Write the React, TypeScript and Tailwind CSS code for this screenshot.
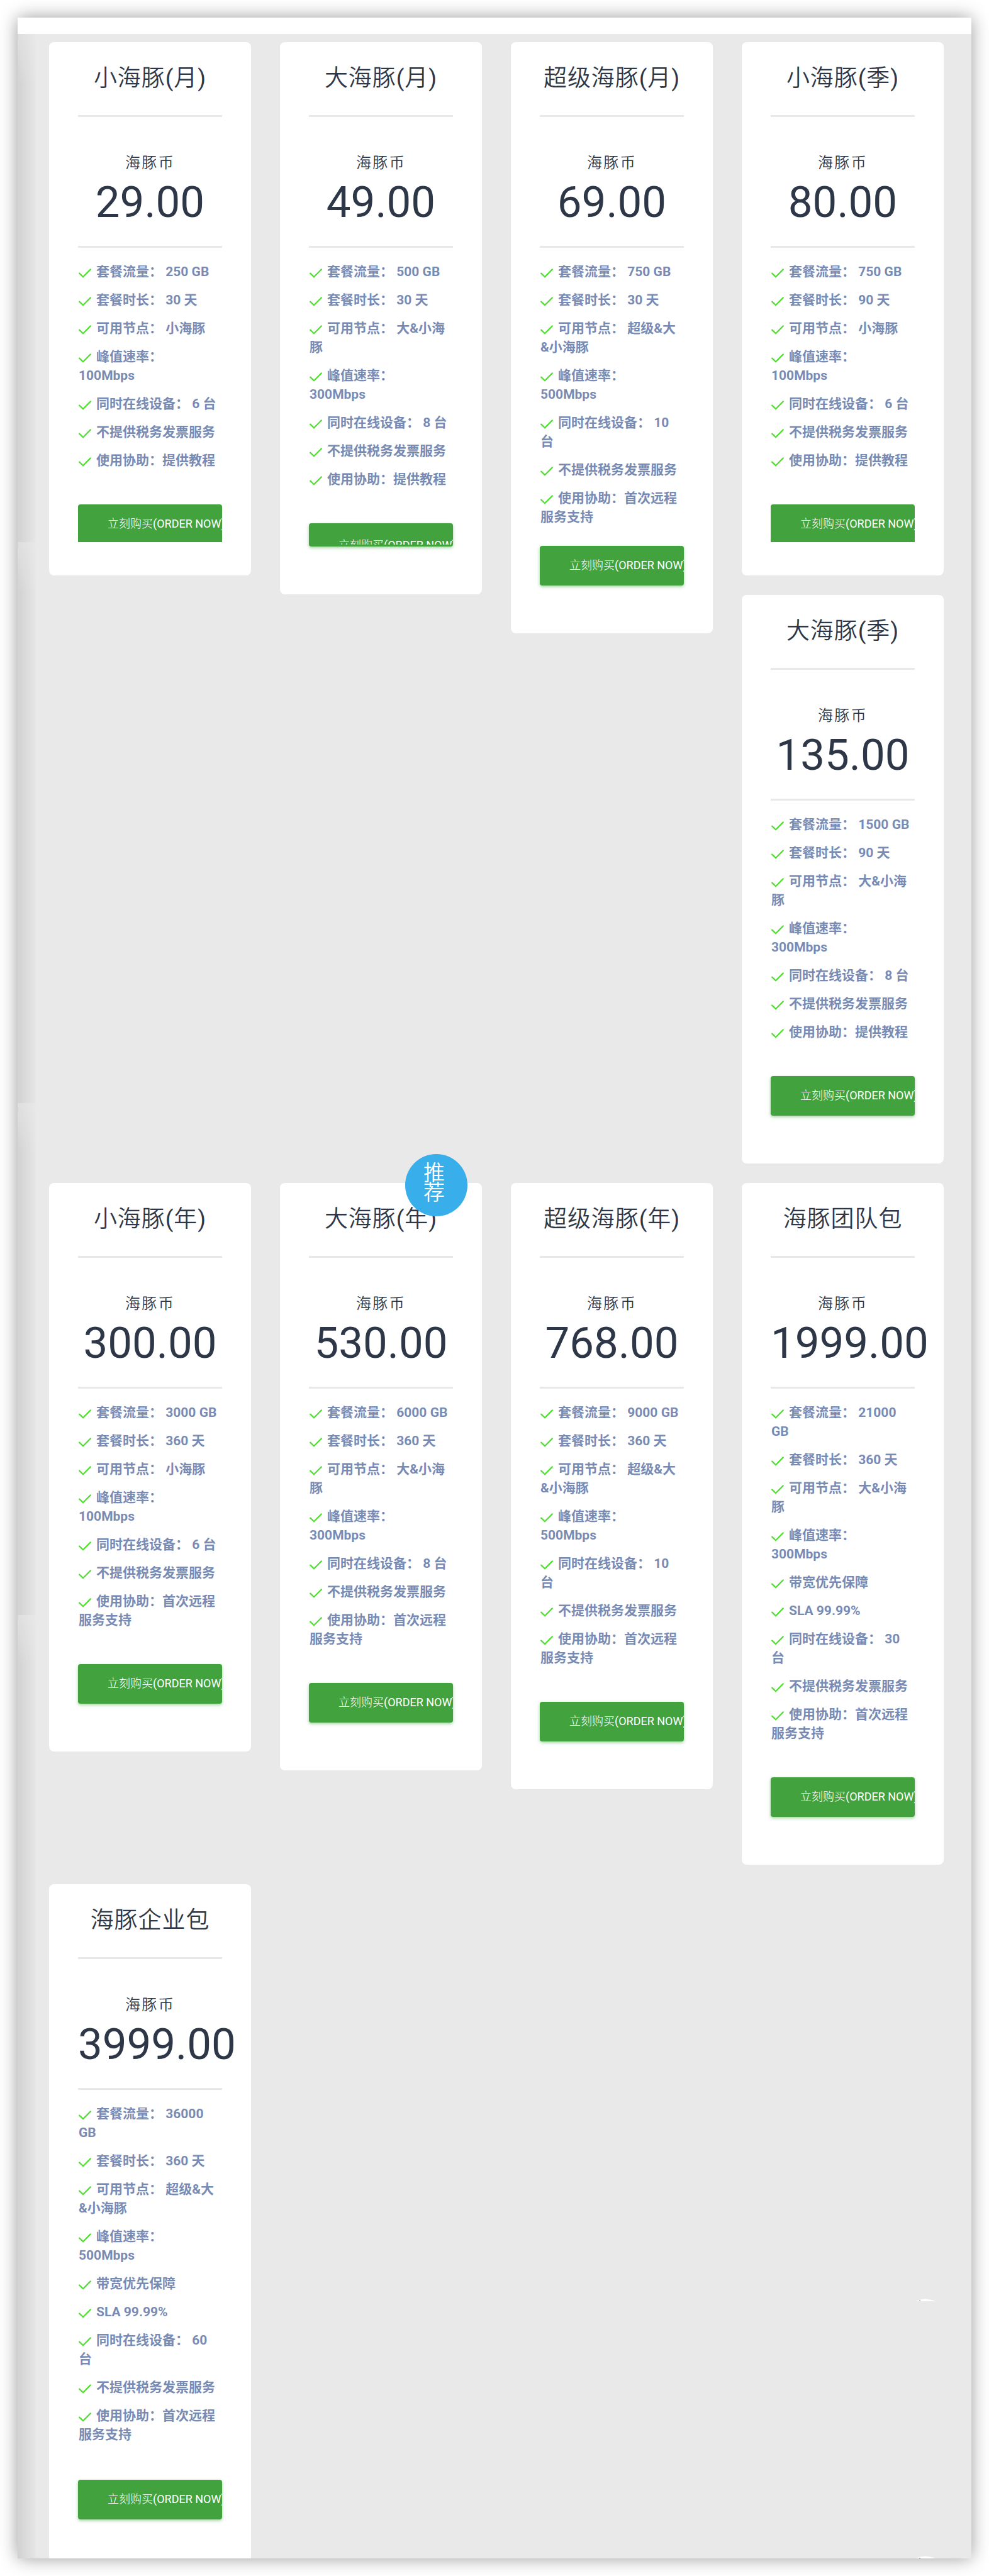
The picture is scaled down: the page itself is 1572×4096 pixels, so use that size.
type Clip = 'none' | 'square' | 'cut' | 'tight' | 'last';

interface Plan {
  name: string;
  price: string;
  items: string[];
  clip?: Clip;
  badge?: boolean;
}

function features(flow: string, days: string, nodes: string, rate: string, devices: string, help: string, extra: string[] = []) {
  return [
    `套餐流量： ${flow} GB`,
    `套餐时长： ${days} 天`,
    `可用节点： ${nodes}`,
    `峰值速率： ${rate}Mbps`,
    ...extra,
    `同时在线设备： ${devices} 台`,
    '不提供税务发票服务',
    `使用协助：${help}`,
  ];
}

const TUTORIAL = '提供教程';
const REMOTE = '首次远程服务支持';
const PREMIUM = ['带宽优先保障', 'SLA 99.99%'];

const monthly: Plan[] = [
  { name: '小海豚(月)', price: '29.00', clip: 'square', items: features('250', '30', '小海豚', '100', '6', TUTORIAL) },
  { name: '大海豚(月)', price: '49.00', clip: 'cut', items: features('500', '30', '大&小海豚', '300', '8', TUTORIAL) },
  { name: '超级海豚(月)', price: '69.00', clip: 'tight', items: features('750', '30', '超级&大&小海豚', '500', '10', REMOTE) },
];

const quarterly: Plan[] = [
  { name: '小海豚(季)', price: '80.00', clip: 'square', items: features('750', '90', '小海豚', '100', '6', TUTORIAL) },
  { name: '大海豚(季)', price: '135.00', items: features('1500', '90', '大&小海豚', '300', '8', TUTORIAL) },
];

const yearly: Plan[] = [
  { name: '小海豚(年)', price: '300.00', items: features('3000', '360', '小海豚', '100', '6', REMOTE) },
  { name: '大海豚(年)', price: '530.00', badge: true, items: features('6000', '360', '大&小海豚', '300', '8', REMOTE) },
  { name: '超级海豚(年)', price: '768.00', items: features('9000', '360', '超级&大&小海豚', '500', '10', REMOTE) },
  { name: '海豚团队包', price: '1999.00', items: features('21000', '360', '大&小海豚', '300', '30', REMOTE, PREMIUM) },
  { name: '海豚企业包', price: '3999.00', clip: 'last', items: features('36000', '360', '超级&大&小海豚', '500', '60', REMOTE, PREMIUM) },
];

const cardClass: Record<Clip, string> = {
  none: 'rounded-lg pb-[76px]',
  square: 'rounded-lg pb-[53px]',
  cut: 'rounded-lg pb-[76px]',
  tight: 'rounded-lg pb-[76px]',
  last: 'rounded-t-lg pb-[62px]',
};

const buttonClass: Record<Clip, string> = {
  none: 'mt-[55px] h-[63px] rounded shadow-[0_2px_5px_rgba(66,163,62,0.5)]',
  square: 'mt-[55px] h-[60px] rounded-t',
  cut: 'mt-[55px] h-[37px] rounded shadow-[0_2px_5px_rgba(66,163,62,0.5)]',
  tight: 'mt-[31px] h-[63px] rounded shadow-[0_2px_5px_rgba(66,163,62,0.5)]',
  last: 'mt-[57px] h-[63px] rounded shadow-[0_2px_5px_rgba(66,163,62,0.5)]',
};

/* Chinese glyphs keep the light weight, Latin runs take the regular one. */
function Mixed({ text }: { text: string }) {
  return (
    <>
      {text.split(/([\x20-\x7e]+)/).map((part, i) =>
        i % 2 ? (
          <span key={i} className="font-normal">
            {part}
          </span>
        ) : (
          part
        ),
      )}
    </>
  );
}

function Check() {
  return (
    <svg
      viewBox="0 0 20 16"
      className="mr-2 inline-block h-4 w-5 align-[-3px]"
      fill="none"
      stroke="#4fe02f"
      strokeWidth="2.2"
      strokeLinecap="round"
      aria-hidden="true"
    >
      <path d="M1.2 8.6 7 14.2 18.8 2.4" />
    </svg>
  );
}

function PlanCard({ plan }: { plan: Plan }) {
  const clip = plan.clip ?? 'none';
  return (
    <article className={`relative bg-white px-[46px] pt-[33px] text-[#2e3747] ${cardClass[clip]}`}>
      {plan.badge && (
        <span className="absolute -top-[46px] left-[199px] size-[99px] rounded-full bg-[#38aeea] pt-[15px] pr-[36px] pl-[29px] text-[34px] leading-[31px] font-[350] text-white">
          推荐
        </span>
      )}
      <h2 className="text-center text-[37px] leading-[50px] font-[350] tracking-wide whitespace-nowrap">
        <Mixed text={plan.name} />
      </h2>
      <hr className="mt-[33px] border-t-[3px] border-[#e7e9e8]" />
      <p className="mt-[58px] text-center text-2xl leading-[30px] font-[350] tracking-widest">海豚币</p>
      <p className="mt-[13px] text-center text-[69px] leading-[70px]">{plan.price}</p>
      <hr className="mt-[34px] border-t-[3px] border-[#e7e9e8]" />
      <ul className="mt-[23px] pr-[6px] pl-px text-[21px] leading-[30px] font-bold text-[#788bb5]">
        {plan.items.map((item) => (
          <li key={item} className="mb-[15px]">
            <Check />
            {item}
          </li>
        ))}
      </ul>
      <button type="button" className={`block w-full overflow-hidden bg-[#42a33e] text-left text-lg whitespace-nowrap text-white ${buttonClass[clip]}`}>
        <span className={`block overflow-hidden pl-[47px] leading-[62px] font-light ${clip === 'cut' ? 'h-[30px]' : 'h-full'}`}>
          <Mixed text="立刻购买(ORDER NOW)" />
        </span>
      </button>
    </article>
  );
}

const shade =
  'bg-linear-to-r from-black/10 to-black/1 [mask-image:linear-gradient(to_bottom,rgba(0,0,0,0.4),black_80px)]';

function EdgeShade() {
  return (
    <div className="pointer-events-none absolute top-[26px] bottom-0 left-0 flex w-[29px] flex-col" aria-hidden="true">
      <div className={`h-[808px] ${shade}`} />
      <div className={`h-[892px] ${shade}`} />
      <div className={`h-[814px] ${shade}`} />
      <div className={`flex-1 ${shade}`} />
    </div>
  );
}

function Arc({ className }: { className: string }) {
  return (
    <svg viewBox="0 0 32 4" className={`absolute right-[57px] h-1 w-8 ${className}`} aria-hidden="true">
      <path d="M0 4Q16 -3 32 4Z" fill="#fff" />
      <path d="M6 3h2v1H6z" fill="#777" />
    </svg>
  );
}

export default function App() {
  return (
    <div className="bg-white p-[28px] font-[Roboto,'Noto_Sans_CJK_SC',sans-serif]">
      <main className="relative bg-[#e9e9e9] shadow-[0_0_27px_rgba(0,0,0,0.4)]">
        <div className="h-[26px] bg-white" />
        <EdgeShade />
        <div className="grid grid-cols-4 items-start gap-x-[46px] gap-y-[31px] pt-[13px] pr-[44px] pl-[50px]">
          {monthly.map((plan) => (
            <PlanCard key={plan.name} plan={plan} />
          ))}
          <div className="flex flex-col gap-[31px]">
            {quarterly.map((plan) => (
              <PlanCard key={plan.name} plan={plan} />
            ))}
          </div>
          {yearly.map((plan) => (
            <PlanCard key={plan.name} plan={plan} />
          ))}
        </div>
        <Arc className="bottom-[409px]" />
        <Arc className="bottom-0" />
      </main>
    </div>
  );
}
